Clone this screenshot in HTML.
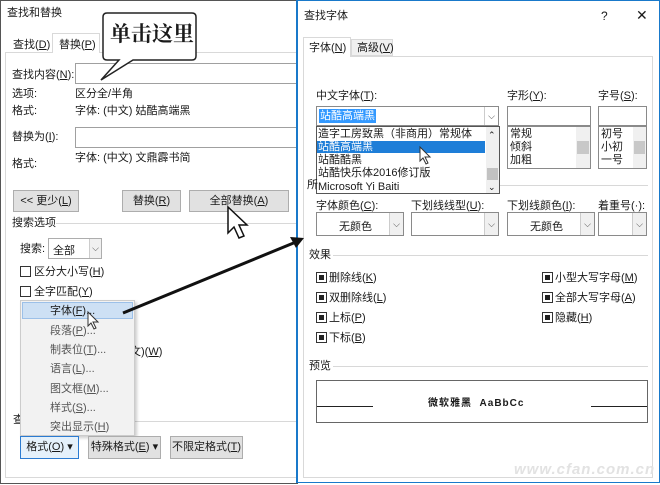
<!DOCTYPE html>
<html><head><meta charset="utf-8"><style>
*{box-sizing:border-box;margin:0;padding:0}
body{width:660px;height:485px;overflow:hidden;background:#fff;position:relative;font-family:"Liberation Sans","Microsoft YaHei","Noto Sans CJK SC",sans-serif;font-size:11px;color:#1a1a1a}
.a{position:absolute;white-space:nowrap;line-height:13px}
.b{position:absolute}
.btn{position:absolute;background:#e1e1e1;border:1px solid #adadad;text-align:center;line-height:20px}
.inp{position:absolute;background:#fff;border:1px solid #8a8a8a}
.cb{position:absolute;width:11px;height:11px;border:1px solid #333;background:#fff}
.cbf{position:absolute;width:11px;height:11px;border:1px solid #333;background:#fff}
.cbf:after{content:"";position:absolute;left:2px;top:2px;width:5px;height:5px;background:#222}
.dd{position:absolute;top:0;right:0;width:14px;height:100%;border-left:1px solid #ccc;background:#f0f0f0;font-size:9px;text-align:center;color:#444}
.ln{position:absolute;height:1px;background:#d8d8d8}
</style></head><body>
<!-- left dialog -->
<div class="b" style="left:0;top:0;width:298px;height:484px;border:1px solid #555;background:#fff"></div>
<div class="a" style="left:7px;top:7px">查找和替换</div>
<div class="b" style="left:5px;top:52px;width:292px;height:426px;border:1px solid #d9d9d9"></div>
<div class="a" style="left:13px;top:39px">查找(<u>D</u>)</div>
<div class="b" style="left:52px;top:33px;width:48px;height:20px;border:1px solid #d9d9d9;border-bottom:none;background:#fff"></div>
<div class="a" style="left:59px;top:39px">替换(<u>P</u>)</div>
<div class="a" style="left:12px;top:69px">查找内容(<u>N</u>):</div>
<div class="inp" style="left:75px;top:63px;width:225px;height:21px;border-color:#a0a0a0"></div>
<div class="a" style="left:12px;top:88px">选项:</div><div class="a" style="left:75px;top:88px">区分全/半角</div>
<div class="a" style="left:12px;top:105px">格式:</div><div class="a" style="left:75px;top:105px">字体: (中文) 姑酷高端黑</div>
<div class="a" style="left:12px;top:131px">替换为(<u>I</u>):</div>
<div class="inp" style="left:75px;top:127px;width:225px;height:21px;border-color:#a0a0a0"></div>
<div class="a" style="left:75px;top:152px">字体: (中文) 文鼎霹书简</div>
<div class="a" style="left:12px;top:158px">格式:</div>
<div class="btn" style="left:13px;top:190px;width:66px;height:22px">&lt;&lt; 更少(<u>L</u>)</div>
<div class="btn" style="left:122px;top:190px;width:59px;height:22px">替换(<u>R</u>)</div>
<div class="btn" style="left:189px;top:190px;width:100px;height:22px">全部替换(<u>A</u>)</div>
<div class="a" style="left:12px;top:217px">搜索选项</div>
<div class="ln" style="left:56px;top:223px;width:240px"></div>
<div class="a" style="left:20px;top:243px">搜索:</div>
<div class="inp" style="left:48px;top:238px;width:54px;height:21px;border-color:#adadad"><span style="position:absolute;left:4px;top:3px">全部</span><div class="dd" style="width:12px;line-height:19px">⌵</div></div>
<div class="cb" style="left:20px;top:266px"></div><div class="a" style="left:34px;top:266px">区分大小写(<u>H</u>)</div>
<div class="cb" style="left:20px;top:286px"></div><div class="a" style="left:34px;top:286px">全字匹配(<u>Y</u>)</div>
<div class="a" style="left:130px;top:346px">文)(<u>W</u>)</div>
<div class="a" style="left:13px;top:414px">查</div>
<div class="ln" style="left:134px;top:421px;width:162px"></div>
<div class="b" style="left:20px;top:300px;width:115px;height:136px;background:#f2f2f2;border:1px solid #ccc;box-shadow:2px 2px 3px rgba(0,0,0,.2)"></div>
<div class="b" style="left:22px;top:302px;width:111px;height:17px;background:#cde0f4;border:1px solid #9cc0e8"></div>
<div class="a" style="left:50px;top:305px">字体(<u>F</u>)...</div>
<div class="a" style="left:50px;top:325px;color:#555">段落(<u>P</u>)...</div>
<div class="a" style="left:50px;top:344px;color:#555">制表位(<u>T</u>)...</div>
<div class="a" style="left:50px;top:363px;color:#555">语言(<u>L</u>)...</div>
<div class="a" style="left:50px;top:383px;color:#555">图文框(<u>M</u>)...</div>
<div class="a" style="left:50px;top:402px;color:#555">样式(<u>S</u>)...</div>
<div class="a" style="left:50px;top:421px;color:#555">突出显示(<u>H</u>)</div>
<div class="btn" style="left:20px;top:436px;width:59px;height:23px;border-color:#2b7bd1;background:#e5f1fb">格式(<u>O</u>) ▾</div>
<div class="btn" style="left:88px;top:436px;width:73px;height:23px">特殊格式(<u>E</u>) ▾</div>
<div class="btn" style="left:170px;top:436px;width:73px;height:23px">不限定格式(<u>T</u>)</div>
<!-- callout -->
<svg class="b" style="left:95px;top:10px" width="110" height="75"><path d="M12 3 H97 Q101 3 101 7 V46 Q101 50 97 50 H38 L6 70 L24 50 H12 Q8 50 8 46 V7 Q8 3 12 3Z" fill="#fff" stroke="#222" stroke-width="1.5"/></svg>
<div class="a" style="left:110px;top:21px;font-size:21px;line-height:24px;font-weight:bold;font-family:'Noto Serif CJK SC',serif">单击这里</div>
<!-- right dialog -->
<div class="b" style="left:296px;top:0;width:364px;height:483px;border:1px solid #1979ca;border-left-width:2px;background:#fff"></div>
<div class="a" style="left:304px;top:10px">查找字体</div>
<div class="a" style="left:601px;top:10px;font-size:12px">?</div>
<div class="a" style="left:636px;top:9px;font-size:14px">✕</div>
<div class="b" style="left:303px;top:56px;width:350px;height:422px;border:1px solid #d9d9d9"></div>
<div class="b" style="left:303px;top:37px;width:48px;height:20px;border:1px solid #d9d9d9;border-bottom:none;background:#fff"></div>
<div class="a" style="left:309px;top:42px">字体(<u>N</u>)</div>
<div class="b" style="left:351px;top:39px;width:42px;height:17px;border:1px solid #d9d9d9;background:#f0f0f0"></div>
<div class="a" style="left:357px;top:42px">高级(<u>V</u>)</div>
<div class="a" style="left:316px;top:90px">中文字体(<u>T</u>):</div>
<div class="inp" style="left:316px;top:106px;width:183px;height:20px"><span style="position:absolute;left:2px;top:2px;background:#3399ff;color:#fff;padding:0 1px;line-height:14px">站酷高端黑</span><div class="dd" style="line-height:18px;background:#fff">⌵</div></div>
<div class="b" style="left:316px;top:126px;width:184px;height:68px;border:1px solid #555;background:#fff"></div>
<div class="b" style="left:317px;top:141px;width:168px;height:12px;background:#1e7ed8"></div>
<div class="a" style="left:318px;top:128px;font-size:11px">造字工房致黑（非商用）常规体</div>
<div class="a" style="left:318px;top:141px;color:#fff">站酷高端黑</div>
<div class="a" style="left:318px;top:154px">站酷酷黑</div>
<div class="a" style="left:318px;top:167px">站酷快乐体2016修订版</div>
<div class="a" style="left:318px;top:181px">Microsoft Yi Baiti</div>
<div class="b" style="left:486px;top:127px;width:13px;height:66px;background:#f0f0f0"></div>
<div class="b" style="left:487px;top:168px;width:11px;height:12px;background:#c2c2c2"></div>
<div class="a" style="left:488px;top:129px;font-size:9px">⌃</div><div class="a" style="left:488px;top:181px;font-size:9px">⌄</div>
<div class="a" style="left:307px;top:179px">所</div>
<div class="a" style="left:507px;top:90px">字形(<u>Y</u>):</div>
<div class="inp" style="left:507px;top:106px;width:84px;height:20px"></div>
<div class="b" style="left:507px;top:126px;width:84px;height:43px;border:1px solid #8a8a8a"></div>
<div class="a" style="left:510px;top:128px">常规</div><div class="a" style="left:510px;top:141px">倾斜</div><div class="a" style="left:510px;top:154px">加粗</div>
<div class="b" style="left:576px;top:127px;width:14px;height:41px;background:#f0f0f0"></div><div class="b" style="left:577px;top:141px;width:12px;height:13px;background:#c8c8c8"></div>
<div class="a" style="left:598px;top:90px">字号(<u>S</u>):</div>
<div class="inp" style="left:598px;top:106px;width:49px;height:20px"></div>
<div class="b" style="left:598px;top:126px;width:49px;height:43px;border:1px solid #8a8a8a"></div>
<div class="a" style="left:601px;top:128px">初号</div><div class="a" style="left:601px;top:141px">小初</div><div class="a" style="left:601px;top:154px">一号</div>
<div class="b" style="left:633px;top:127px;width:13px;height:41px;background:#f0f0f0"></div><div class="b" style="left:634px;top:141px;width:11px;height:13px;background:#c8c8c8"></div>
<div class="ln" style="left:500px;top:185px;width:148px"></div>
<div class="a" style="left:316px;top:200px">字体颜色(<u>C</u>):</div>
<div class="a" style="left:411px;top:200px">下划线线型(<u>U</u>):</div>
<div class="a" style="left:507px;top:200px">下划线颜色(<u>I</u>):</div>
<div class="a" style="left:598px;top:200px">着重号(·):</div>
<div class="inp" style="left:316px;top:212px;width:88px;height:24px"><span style="position:absolute;left:22px;top:5px">无颜色</span><div class="dd" style="line-height:22px">⌵</div></div>
<div class="inp" style="left:411px;top:212px;width:88px;height:24px"><div class="dd" style="line-height:22px">⌵</div></div>
<div class="inp" style="left:507px;top:212px;width:88px;height:24px"><span style="position:absolute;left:22px;top:5px">无颜色</span><div class="dd" style="line-height:22px">⌵</div></div>
<div class="inp" style="left:598px;top:212px;width:49px;height:24px"><div class="dd" style="line-height:22px">⌵</div></div>
<div class="a" style="left:309px;top:249px">效果</div><div class="ln" style="left:333px;top:255px;width:315px"></div>
<div class="cbf" style="left:316px;top:272px"></div><div class="a" style="left:329px;top:272px">删除线(<u>K</u>)</div>
<div class="cbf" style="left:316px;top:292px"></div><div class="a" style="left:329px;top:292px">双删除线(<u>L</u>)</div>
<div class="cbf" style="left:316px;top:312px"></div><div class="a" style="left:329px;top:312px">上标(<u>P</u>)</div>
<div class="cbf" style="left:316px;top:332px"></div><div class="a" style="left:329px;top:332px">下标(<u>B</u>)</div>
<div class="cbf" style="left:542px;top:272px"></div><div class="a" style="left:555px;top:272px">小型大写字母(<u>M</u>)</div>
<div class="cbf" style="left:542px;top:292px"></div><div class="a" style="left:555px;top:292px">全部大写字母(<u>A</u>)</div>
<div class="cbf" style="left:542px;top:312px"></div><div class="a" style="left:555px;top:312px">隐藏(<u>H</u>)</div>
<div class="a" style="left:309px;top:360px">预览</div><div class="ln" style="left:333px;top:366px;width:315px"></div>
<div class="b" style="left:316px;top:380px;width:332px;height:43px;border:1px solid #666"></div>
<div class="b" style="left:317px;top:406px;width:56px;height:1px;background:#222"></div>
<div class="b" style="left:591px;top:406px;width:56px;height:1px;background:#222"></div>
<div class="a" style="left:428px;top:397px;font-weight:bold;font-size:10px;letter-spacing:1px">微软雅黑 &nbsp;AaBbCc</div>
<div class="a" style="left:514px;top:463px;font-size:15px;font-style:italic;font-weight:bold;color:#e2e2e2;letter-spacing:1px">www.cfan.com.cn</div>
<!-- arrow + cursors -->
<svg class="b" style="left:0;top:0" width="660" height="485">
<line x1="123" y1="313" x2="296" y2="242" stroke="#111" stroke-width="3"/>
<path d="M304 238 L290 237 L296 248Z" fill="#111"/>
<path d="M228 207 V233 L234 227 L239 238 L244 236 L239 225 L247 225Z" fill="#fff" stroke="#111" stroke-width="1.5"/>
<path d="M88 312 V326 L91 323 L94 329 L96 328 L93 322 L98 322Z" fill="#fff" stroke="#333" stroke-width="1"/>
<path d="M420 147 V161 L423 158 L426 164 L428 163 L425 157 L430 157Z" fill="#fff" stroke="#333" stroke-width="1"/>
</svg>
</body></html>
